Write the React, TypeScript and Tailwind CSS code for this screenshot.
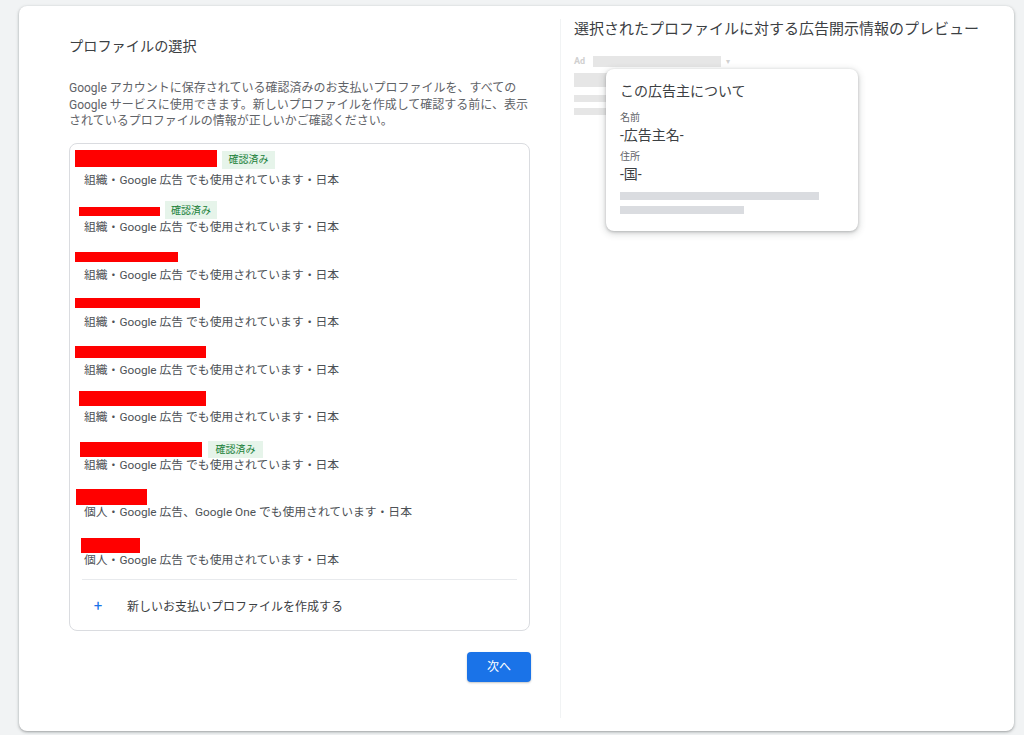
const FONT = { fontFamily: 'Roboto, "Noto Sans CJK JP", "Noto Sans", sans-serif' };

type Item = {
  sub: string;
  red: { ml: string; mt: string; w: string; h: string };
  badge?: { ml: string; mt: string; w: string; h: string };
};

const ORG = '組織・Google 広告 でも使用されています・日本';

const items: Item[] = [
  { sub: ORG, red: { ml: 'ml-[5px]', mt: 'mt-[2px]', w: 'w-[142px]', h: 'h-[17px]' }, badge: { ml: 'ml-[5px]', mt: 'mt-[3px]', w: 'w-[53px]', h: 'h-[18px]' } },
  { sub: ORG, red: { ml: 'ml-[9px]', mt: 'mt-[12px]', w: 'w-[81px]', h: 'h-[9px]' }, badge: { ml: 'ml-[5px]', mt: 'mt-[6px]', w: 'w-[52px]', h: 'h-[18px]' } },
  { sub: ORG, red: { ml: 'ml-[5px]', mt: 'mt-[9px]', w: 'w-[103px]', h: 'h-[10px]' } },
  { sub: ORG, red: { ml: 'ml-[5px]', mt: 'mt-[8px]', w: 'w-[125px]', h: 'h-[10px]' } },
  { sub: ORG, red: { ml: 'ml-[5px]', mt: 'mt-[8px]', w: 'w-[131px]', h: 'h-[12px]' } },
  { sub: ORG, red: { ml: 'ml-[9px]', mt: 'mt-[6px]', w: 'w-[127px]', h: 'h-[15px]' } },
  { sub: ORG, red: { ml: 'ml-[10px]', mt: 'mt-[9px]', w: 'w-[122px]', h: 'h-[15px]' }, badge: { ml: 'ml-[6px]', mt: 'mt-[8px]', w: 'w-[55px]', h: 'h-[17px]' } },
  { sub: '個人・Google 広告、Google One でも使用されています・日本', red: { ml: 'ml-[6px]', mt: 'mt-[9px]', w: 'w-[71px]', h: 'h-[16px]' } },
  { sub: '個人・Google 広告 でも使用されています・日本', red: { ml: 'ml-[11px]', mt: 'mt-[10px]', w: 'w-[59px]', h: 'h-[15px]' } },
];

function ProfileRow({ item }: { item: Item }) {
  return (
    <div className="h-[47.5px]">
      <div className="flex items-start h-[24px]">
        <div className={`${item.red.ml} ${item.red.mt} ${item.red.w} ${item.red.h} bg-[#ff0000]`} />
        {item.badge && (
          <div
            className={`${item.badge.ml} ${item.badge.mt} ${item.badge.w} ${item.badge.h} bg-[#e6f4ea] text-[#188038] text-[10px] flex items-center justify-center`}
          >
            確認済み
          </div>
        )}
      </div>
      <p className="pl-[14px] text-[11.8px] leading-4 text-[#4d5156] whitespace-nowrap">{item.sub}</p>
    </div>
  );
}

export default function App() {
  return (
    <div className="min-h-screen bg-[#f1f3f4] pt-[6px] pl-[19px]" style={FONT}>
      <div className="w-[995px] h-[725px] bg-white rounded-lg shadow-[0_1px_2px_rgba(60,64,67,0.3),0_1px_3px_1px_rgba(60,64,67,0.15)] flex">
        {/* Left: profile selection */}
        <div className="w-[541px] pl-[50px] pr-[30px] pt-[28px] shrink-0">
          <h1 className="text-[14.2px] leading-6 text-[#3c4043]">プロファイルの選択</h1>
          <p className="mt-[22px] text-[12px] leading-[16.5px] text-[#5f6368] whitespace-nowrap">
            Google アカウントに保存されている確認済みのお支払いプロファイルを、すべての
            <br />
            Google サービスに使用できます。新しいプロファイルを作成して確認する前に、表示
            <br />
            されているプロファイルの情報が正しいかご確認ください。
          </p>

          <div className="mt-[13px] border border-[#dadce0] rounded-lg pt-[4px]">
            {items.map((item, i) => (
              <ProfileRow key={i} item={item} />
            ))}
            <div className="mx-[12px] mt-[4px] border-t border-[#e8eaed]" />
            <div className="h-[50px] flex items-center pt-[3px]">
              <span className="ml-[22px] w-[12px] text-center text-[15px] text-[#1a73e8] leading-none">+</span>
              <span className="ml-[23px] text-[12px] text-[#3c4043]">新しいお支払いプロファイルを作成する</span>
            </div>
          </div>

          <div className="flex justify-end mt-[21px] mr-[-1px]">
            <button className="w-[64px] h-[30px] rounded bg-[#1a73e8] text-white text-[12px] shadow-[0_1px_2px_rgba(60,64,67,0.3)]">
              次へ
            </button>
          </div>
        </div>

        {/* Right: preview */}
        <div className="flex-1 my-[13px] mr-[13px] border-l border-[#f1f3f4] pl-[13px]">
          <h2 className="text-[15px] leading-5 text-[#3c4043] whitespace-nowrap">
            選択されたプロファイルに対する広告開示情報のプレビュー
          </h2>
          <div className="relative mt-[17px]">
            <div className="flex items-center h-[11px]">
              <span className="text-[9px] font-bold text-[#d0d0d0] leading-none">Ad</span>
              <div className="ml-[8px] w-[128px] h-[11px] bg-[#e6e6e6]" />
              <span className="ml-[5px] text-[8px] text-[#d0d0d0] leading-none">▾</span>
            </div>
            <div className="mt-[6px] w-[200px] h-[14px] bg-[#e6e6e6]" />
            <div className="mt-[8px] w-[200px] h-[7px] bg-[#e6e6e6]" />
            <div className="mt-[6px] w-[200px] h-[7px] bg-[#e6e6e6]" />

            {/* Advertiser popup */}
            <div className="absolute left-[32px] top-[13px] w-[252px] h-[162px] bg-white rounded-lg shadow-[0_1px_3px_rgba(60,64,67,0.3),0_2px_6px_2px_rgba(60,64,67,0.15)] px-[14px] pt-[12px]">
              <p className="text-[14px] leading-5 text-[#3c4043]">この広告主について</p>
              <p className="mt-[10px] text-[10px] leading-[14px] text-[#5f6368]">名前</p>
              <p className="text-[14px] leading-5 text-[#3c4043]">-広告主名-</p>
              <p className="mt-[5px] text-[10px] leading-[14px] text-[#5f6368]">住所</p>
              <p className="text-[14px] leading-5 text-[#3c4043]">-国-</p>
              <div className="mt-[8px] w-[199px] h-[8px] bg-[#dadce0]" />
              <div className="mt-[6px] w-[124px] h-[8px] bg-[#dadce0]" />
            </div>
          </div>
        </div>
      </div>
    </div>
  );
}
